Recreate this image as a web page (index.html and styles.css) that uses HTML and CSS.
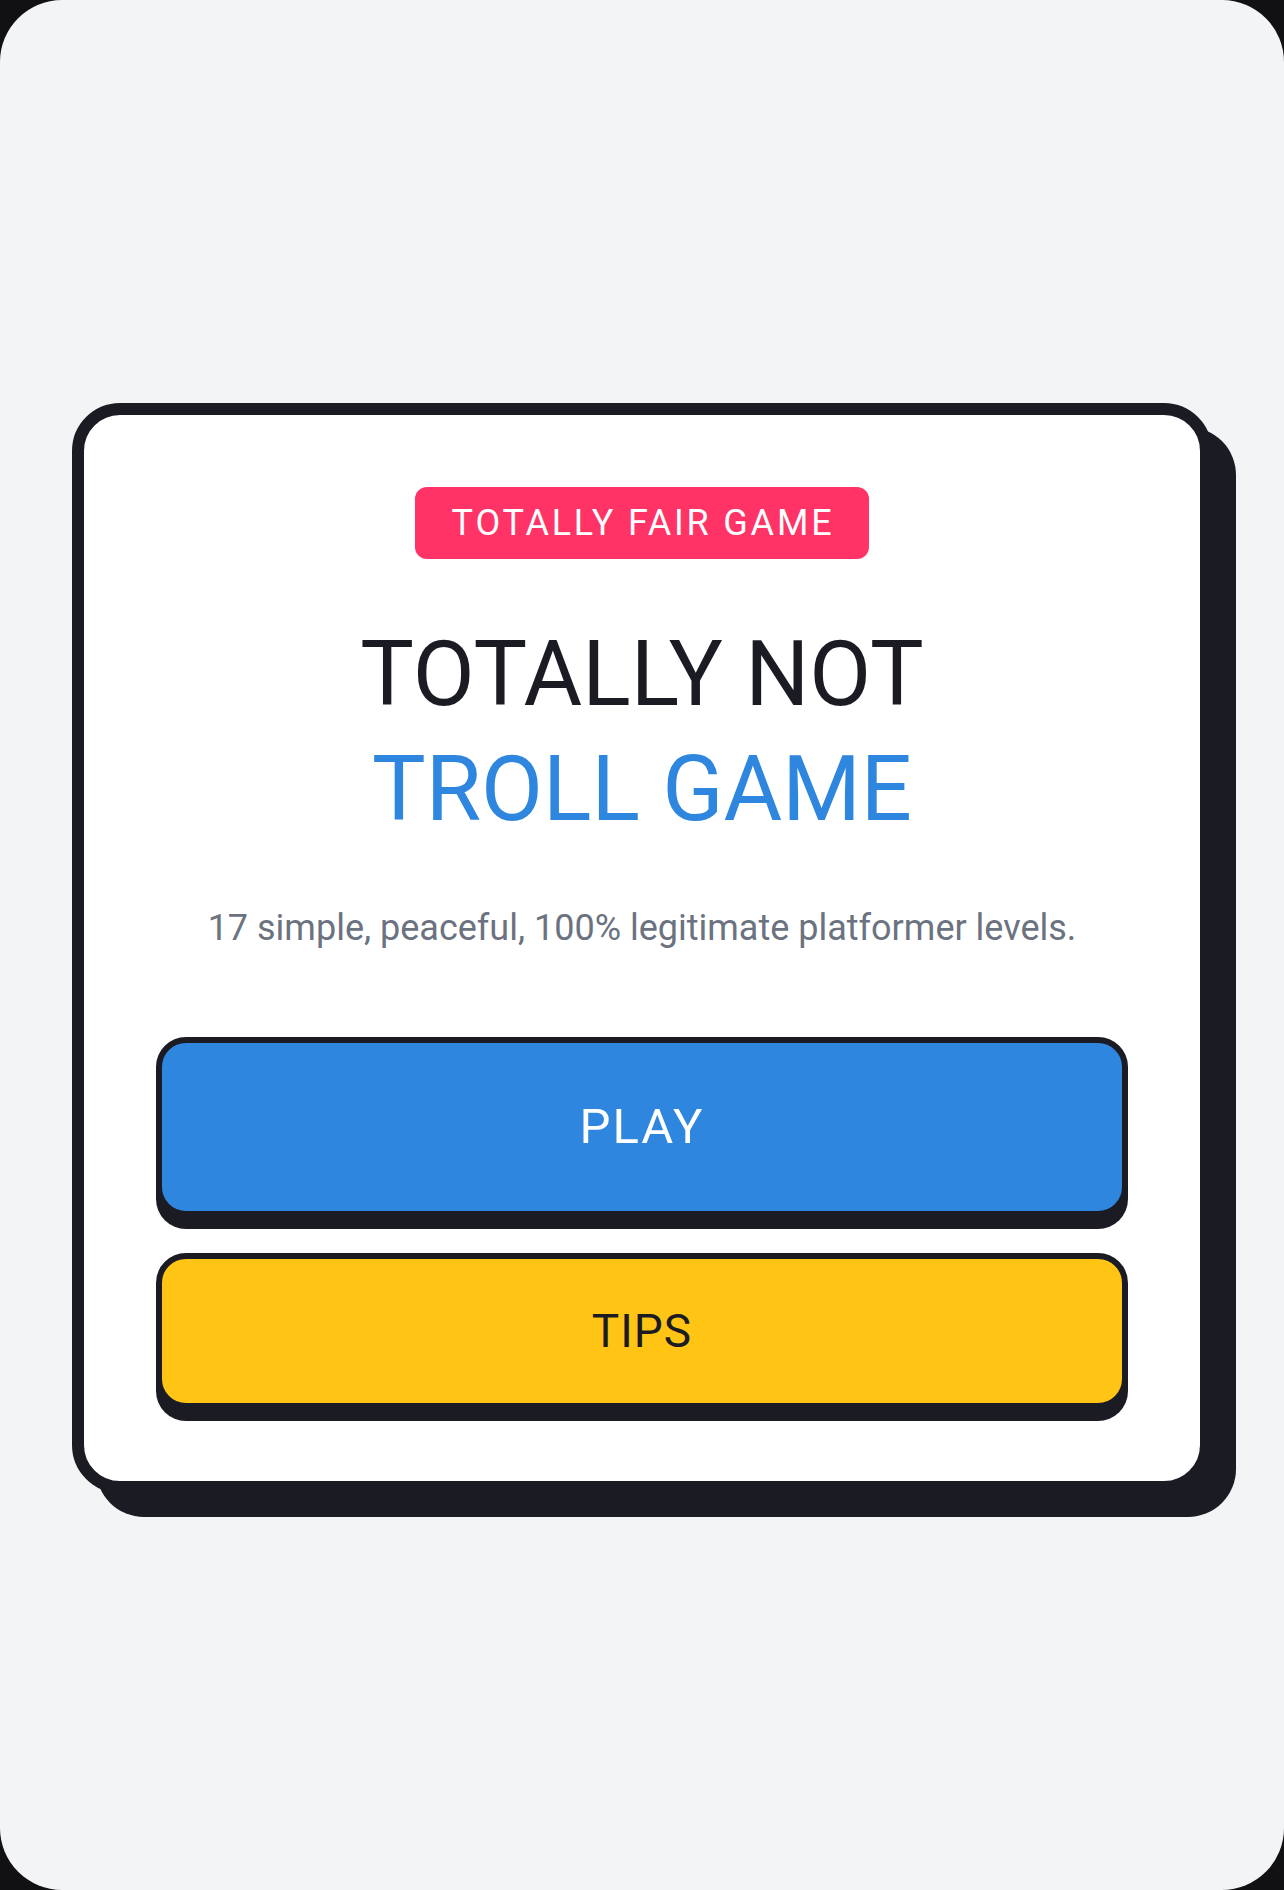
FILE: index.html
```html
<!DOCTYPE html>
<html lang="en">
<head>
<meta charset="utf-8">
<title>Totally Not Troll Game</title>
<link rel="stylesheet" href="styles.css">
</head>
<body>
<div class="screen">
  <main class="card">
    <div class="badge">TOTALLY FAIR GAME</div>
    <h1 class="title">
      <span class="title-line">TOTALLY NOT</span>
      <span class="title-line accent">TROLL GAME</span>
    </h1>
    <p class="subtitle">17 simple, peaceful, 100% legitimate platformer levels.</p>
    <div class="actions">
      <button class="btn btn-play" type="button">PLAY</button>
      <button class="btn btn-tips" type="button">TIPS</button>
    </div>
  </main>
</div>
</body>
</html>
```

FILE: styles.css
```css
html {
  background: #111114;
}
body {
  margin: 0;
  font-family: Roboto, "Liberation Sans", Arial, sans-serif;
}
.screen {
  min-height: 1890px;
  background: #f3f4f6;
  border-radius: 62px;
  display: flex;
  align-items: center;
  justify-content: center;
  box-sizing: border-box;
  padding: 5px 72px 0;
}
.card {
  width: 100%;
  box-sizing: border-box;
  background: #ffffff;
  border: 12px solid #1b1b24;
  border-radius: 48px;
  box-shadow: 24px 24px 0 #1b1b24;
  padding: 72px;
  display: flex;
  flex-direction: column;
  align-items: center;
}
.badge {
  background: #ff3366;
  color: #ffffff;
  font-size: 36px;
  letter-spacing: 2.8px;
  height: 72px;
  line-height: 72px;
  padding: 0 35px 0 37px;
  border-radius: 12px;
}
.title {
  margin: 58px 0 0;
  font-weight: 400;
  font-size: 90px;
  line-height: 115px;
  letter-spacing: 0;
  color: #1b1b24;
  text-align: center;
  display: flex;
  flex-direction: column;
}
.accent {
  color: #2e86de;
}
.subtitle {
  margin: 54px 0 0;
  font-size: 36px;
  line-height: 54px;
  color: #6b7280;
  text-align: center;
}
.actions {
  margin-top: 82px;
  width: 100%;
  display: flex;
  flex-direction: column;
  gap: 36px;
}
.btn {
  width: 100%;
  border: 6px solid #1b1b24;
  border-radius: 30px;
  box-shadow: 0 12px 0 #1b1b24;
  font-family: inherit;
  font-weight: 400;
  cursor: pointer;
  padding: 0;
}
.btn-play {
  height: 180px;
  background: #2e86de;
  color: #ffffff;
  font-size: 49px;
  letter-spacing: 2px;
}
.btn-tips {
  height: 156px;
  background: #ffc414;
  color: #1b1b24;
  font-size: 46px;
  letter-spacing: 1px;
}
```
